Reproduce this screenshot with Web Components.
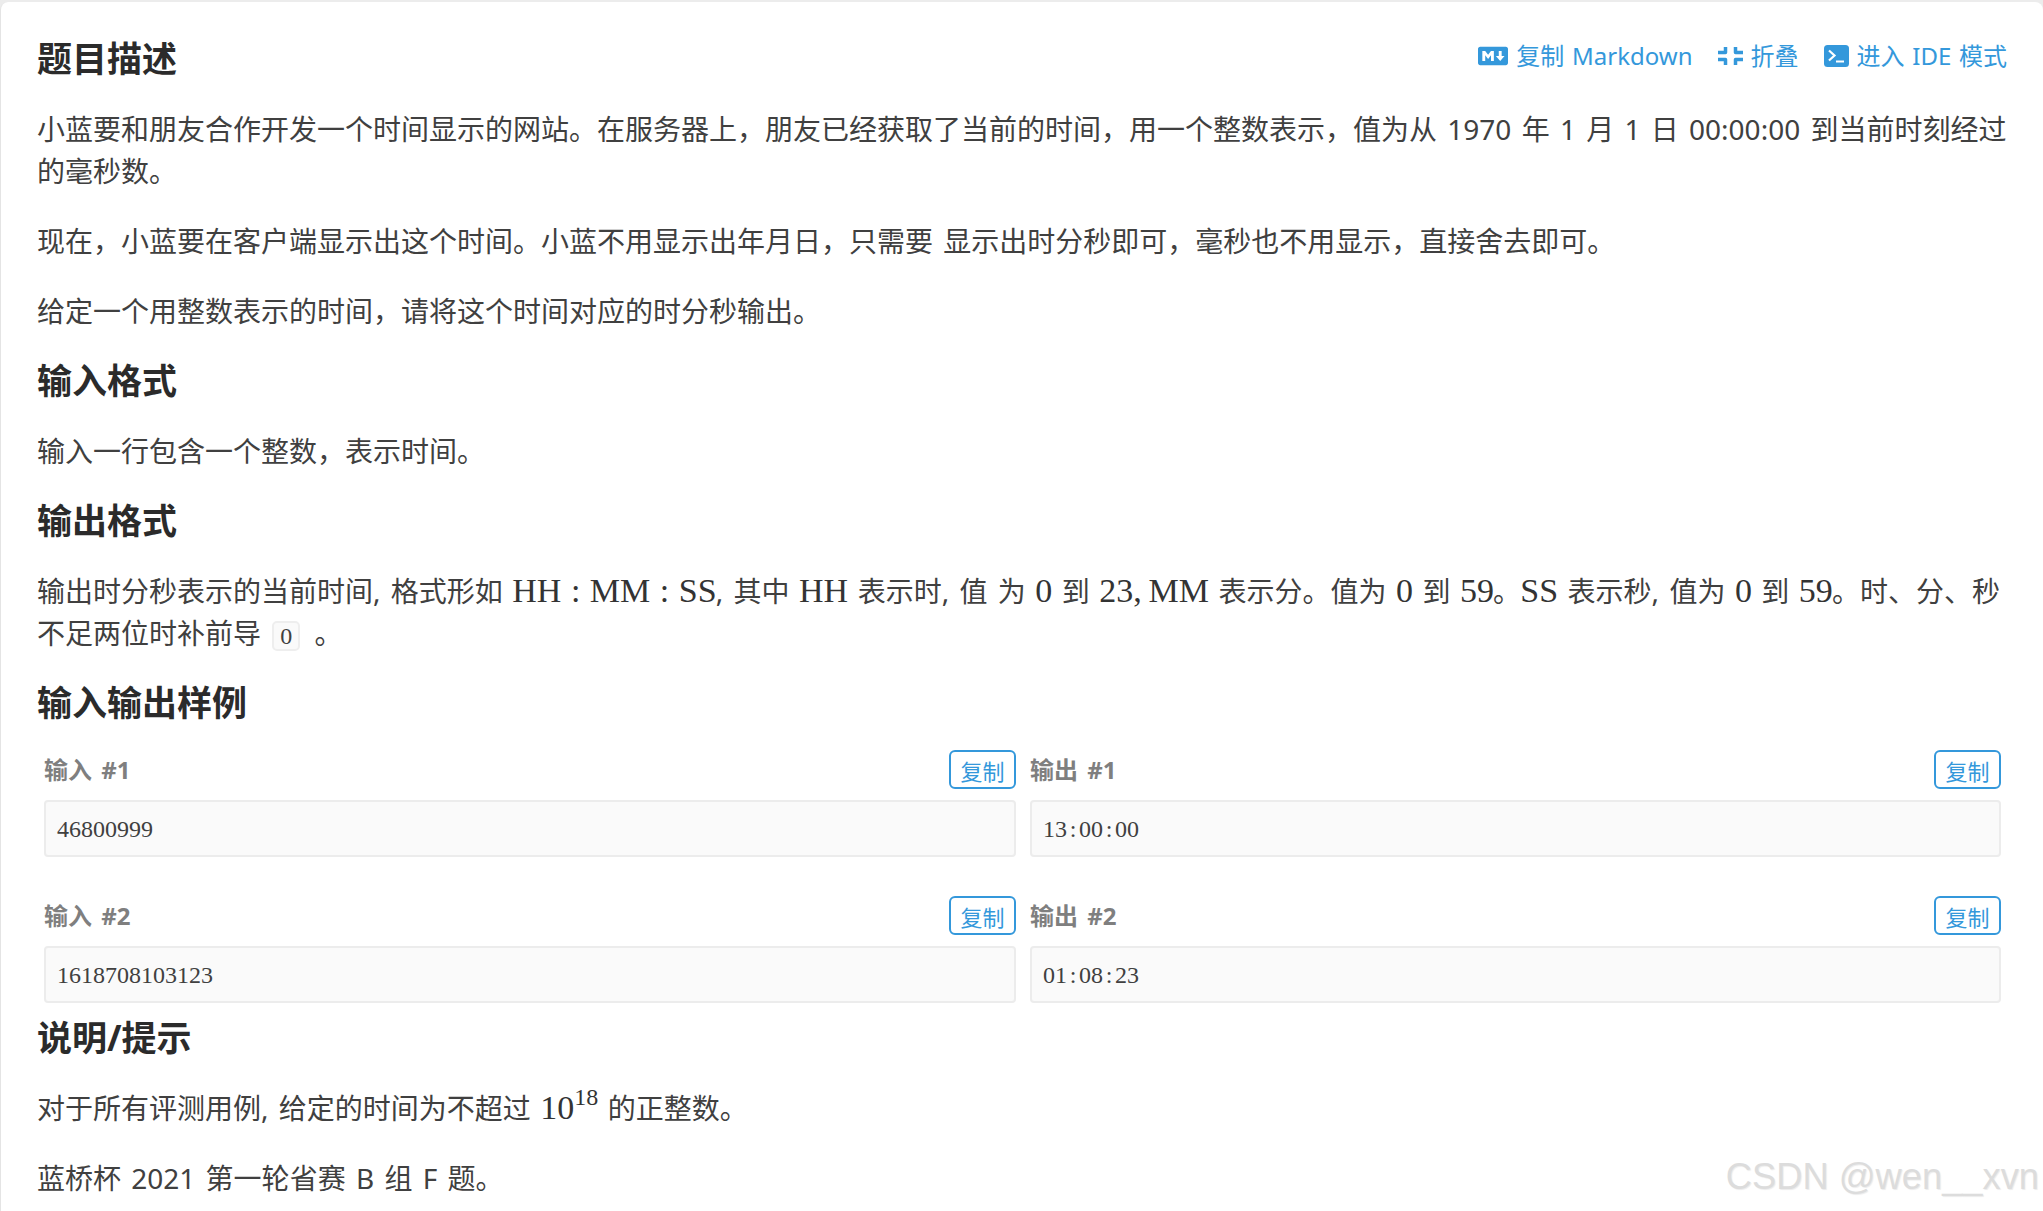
<!DOCTYPE html>
<html lang="zh">
<head>
<meta charset="utf-8">
<title>题目描述</title>
<style>
  html, body { margin: 0; height: 1211px; overflow: hidden; background: #ececec; }
  body { font-family: "Noto Sans", "Noto Sans CJK SC", sans-serif; color: #404040; }
</style>
</head>
<body>
<problem-card>
  <section-title>
    题目描述
    <span slot="actions">
      <tool-link icon="markdown">复制 Markdown</tool-link>
      <tool-link icon="compress">折叠</tool-link>
      <tool-link icon="terminal">进入 IDE 模式</tool-link>
    </span>
  </section-title>
  <text-para>小蓝要和朋友合作开发一个时间显示的网站。在服务器上，朋友已经获取了当前的时间，用一个整数表示，值为从 1970 年 1 月 1 日 00:00:00 到当前时刻经过的毫秒数。</text-para>
  <text-para>现在，小蓝要在客户端显示出这个时间。小蓝不用显示出年月日，只需要 显示出时分秒即可，毫秒也不用显示，直接舍去即可。</text-para>
  <text-para>给定一个用整数表示的时间，请将这个时间对应的时分秒输出。</text-para>
  <section-title>输入格式</section-title>
  <text-para>输入一行包含一个整数，表示时间。</text-para>
  <section-title>输出格式</section-title>
  <text-para>输出时分秒表示的当前时间, 格式形如 <math-text>HH : MM : SS</math-text>, 其中 <math-text>HH</math-text> 表示时, 值 为 <math-text>0</math-text> 到 <math-text>23,&#8201;MM</math-text> 表示分。值为 <math-text>0</math-text> 到 <math-text>59</math-text>。<math-text>SS</math-text> 表示秒, 值为 <math-text>0</math-text> 到 <math-text>59</math-text>。时、分、秒<br>不足两位时补前导 <inline-code>0</inline-code> 。</text-para>
  <section-title>输入输出样例</section-title>
  <sample-list>
    <sample-box label="输入 #1" value="46800999"></sample-box>
    <sample-box label="输出 #1" value="13:00:00"></sample-box>
    <sample-box label="输入 #2" value="1618708103123"></sample-box>
    <sample-box label="输出 #2" value="01:08:23"></sample-box>
  </sample-list>
  <section-title>说明/提示</section-title>
  <text-para>对于所有评测用例, 给定的时间为不超过 <math-text>10<sup-text>18</sup-text></math-text> 的正整数。</text-para>
  <text-para>蓝桥杯 2021 第一轮省赛 B 组 F 题。</text-para>
</problem-card>
<water-mark>CSDN @wen__xvn</water-mark>

<script>
class ProblemCard extends HTMLElement {
  constructor() {
    super();
    this.attachShadow({ mode: 'open' }).innerHTML = `
      <style>
        :host {
          display: block;
          box-sizing: border-box;
          height: 1209px;
          margin-top: 2px;
          padding: 36px 30px 0 36px;
          background: #fff;
          border-radius: 8px 8px 0 0;
          border-left: 1px solid #e4e4e4;
        }
      </style>
      <slot></slot>`;
  }
}

class SectionTitle extends HTMLElement {
  constructor() {
    super();
    this.attachShadow({ mode: 'open' }).innerHTML = `
      <style>
        :host {
          display: flex;
          justify-content: space-between;
          align-items: center;
          height: 42px;
          margin-bottom: 28px;
          font-size: 35px;
          font-weight: 700;
          line-height: 42px;
          color: #2b2b2b;
        }
        .actions { font-weight: 400; display: flex; padding-right: 6px; }
        ::slotted([slot="actions"]) { display: flex; gap: 25px; margin-top: -6px; }
      </style>
      <div><slot></slot></div>
      <div class="actions"><slot name="actions"></slot></div>`;
  }
}

class TextPara extends HTMLElement {
  constructor() {
    super();
    this.attachShadow({ mode: 'open' }).innerHTML = `
      <style>
        :host { display: block; margin-bottom: 28px; font-size: 28px; line-height: 42px; word-spacing: 3px; color: #404040; }
      </style>
      <slot></slot>`;
  }
}

// inline hosts: no whitespace in the shadow root, it would render as a space
class MathText extends HTMLElement {
  constructor() {
    super();
    this.attachShadow({ mode: 'open' }).innerHTML =
      `<style>:host { margin: 0 -0.8px; font-family: "Liberation Serif", serif; font-size: 34px; line-height: 0; word-spacing: 1px; color: #333; }</style><slot></slot>`;
  }
}

class SupText extends HTMLElement {
  constructor() {
    super();
    this.attachShadow({ mode: 'open' }).innerHTML =
      `<style>:host { font-size: 24px; line-height: 0; vertical-align: 14px; }</style><slot></slot>`;
  }
}

class InlineCode extends HTMLElement {
  constructor() {
    super();
    this.attachShadow({ mode: 'open' }).innerHTML = `
      <style>
        :host {
          display: inline-block;
          box-sizing: border-box;
          height: 30px;
          line-height: 27px;
          padding: 0 6px;
          margin: 0 4px 0 1px;
          font-family: "Liberation Serif", serif;
          font-size: 24px;
          background: #fafafa;
          border: 2px solid #eee;
          border-radius: 5px;
          vertical-align: 0;
        }
      </style>
      <slot></slot>`;
  }
}

const TOOL_ICONS = {
  markdown: `<svg width="30" height="24" viewBox="0 0 640 512"><path fill="currentColor" d="M593.8 59.1H46.2C20.7 59.1 0 79.8 0 105.2v301.5c0 25.5 20.7 46.2 46.2 46.2h547.7c25.5 0 46.2-20.7 46.1-46.1V105.2c0-25.4-20.7-46.1-46.2-46.1zM338.5 360.6H277v-120l-61.5 76.9-61.5-76.9v120H92.3V151.4h61.5l61.5 76.9 61.5-76.9h61.5v209.2zm135.3 3.1L381.5 256H443V151.4h61.5V256H566z"/></svg>`,
  compress: `<svg width="25" height="18" viewBox="0 0 25 18"><path fill="none" stroke="currentColor" stroke-width="3.5" stroke-linejoin="round" d="M7.5 0v5.5H0M17.5 0v5.5H25M7.5 18v-5.5H0M17.5 18v-5.5H25"/></svg>`,
  terminal: `<svg width="25" height="22" viewBox="0 0 25 22"><rect width="25" height="22" rx="3.5" fill="currentColor"/><path fill="none" stroke="#fff" stroke-width="2.2" d="M5 5.5l5.5 5-5.5 5M12 16.5h8"/></svg>`
};

class ToolLink extends HTMLElement {
  constructor() {
    super();
    const icon = TOOL_ICONS[this.getAttribute('icon')] || '';
    this.attachShadow({ mode: 'open' }).innerHTML = `
      <style>
        :host {
          display: inline-flex;
          align-items: center;
          gap: 8px;
          font-size: 24px;
          line-height: 32px;
          word-spacing: 1.5px;
          color: #3498db;
          white-space: nowrap;
        }
        svg { display: block; }
      </style>
      ${icon}<span><slot></slot></span>`;
  }
}

class SampleList extends HTMLElement {
  constructor() {
    super();
    this.attachShadow({ mode: 'open' }).innerHTML = `
      <style>
        :host {
          display: grid;
          grid-template-columns: 972px 971px;
          column-gap: 14px;
          row-gap: 39px;
          padding-left: 7px;
          margin-top: -2px;
          margin-bottom: 14px;
        }
      </style>
      <slot></slot>`;
  }
}

class SampleBox extends HTMLElement {
  constructor() {
    super();
    const value = this.getAttribute('value') || '';
    // colons get a full digit cell so the sample reads as monospaced
    const cells = value.replace(/:/g, '<span class="colon">:</span>');
    this.attachShadow({ mode: 'open' }).innerHTML = `
      <style>
        :host { display: block; }
        .head { display: flex; justify-content: space-between; align-items: center; height: 39px; margin-bottom: 11px; }
        .label { margin-top: -3px; font-size: 24px; font-weight: 700; word-spacing: 3px; color: #7f7f7f; }
        button {
          box-sizing: border-box;
          width: 67px;
          height: 39px;
          padding: 0;
          font: 22px "Liberation Sans", "Noto Sans CJK SC", sans-serif;
          color: #3498db;
          background: #fff;
          border: 2px solid #3498db;
          border-radius: 6px;
        }
        .code {
          box-sizing: border-box;
          height: 57px;
          padding: 0 11px;
          font: 24px/55px "Liberation Serif", serif;
          color: #404040;
          background: #fafafa;
          border: 2px solid #ececec;
          border-radius: 4px;
        }
        .colon { display: inline-block; width: 12px; text-align: center; }
      </style>
      <div class="head"><span class="label">${this.getAttribute('label')}</span><button>复制</button></div>
      <div class="code">${cells}</div>`;
  }
}

class WaterMark extends HTMLElement {
  constructor() {
    super();
    this.attachShadow({ mode: 'open' }).innerHTML = `
      <style>
        :host {
          position: absolute;
          right: 4px;
          top: 1153px;
          font: 36.3px/48px "Liberation Sans", sans-serif;
          color: #dcdcdc;
          text-shadow: 1px 1px 1px #ececec;
          white-space: nowrap;
        }
      </style>
      <slot></slot>`;
  }
}

customElements.define('problem-card', ProblemCard);
customElements.define('section-title', SectionTitle);
customElements.define('text-para', TextPara);
customElements.define('math-text', MathText);
customElements.define('sup-text', SupText);
customElements.define('inline-code', InlineCode);
customElements.define('tool-link', ToolLink);
customElements.define('sample-list', SampleList);
customElements.define('sample-box', SampleBox);
customElements.define('water-mark', WaterMark);
</script>
</body>
</html>
